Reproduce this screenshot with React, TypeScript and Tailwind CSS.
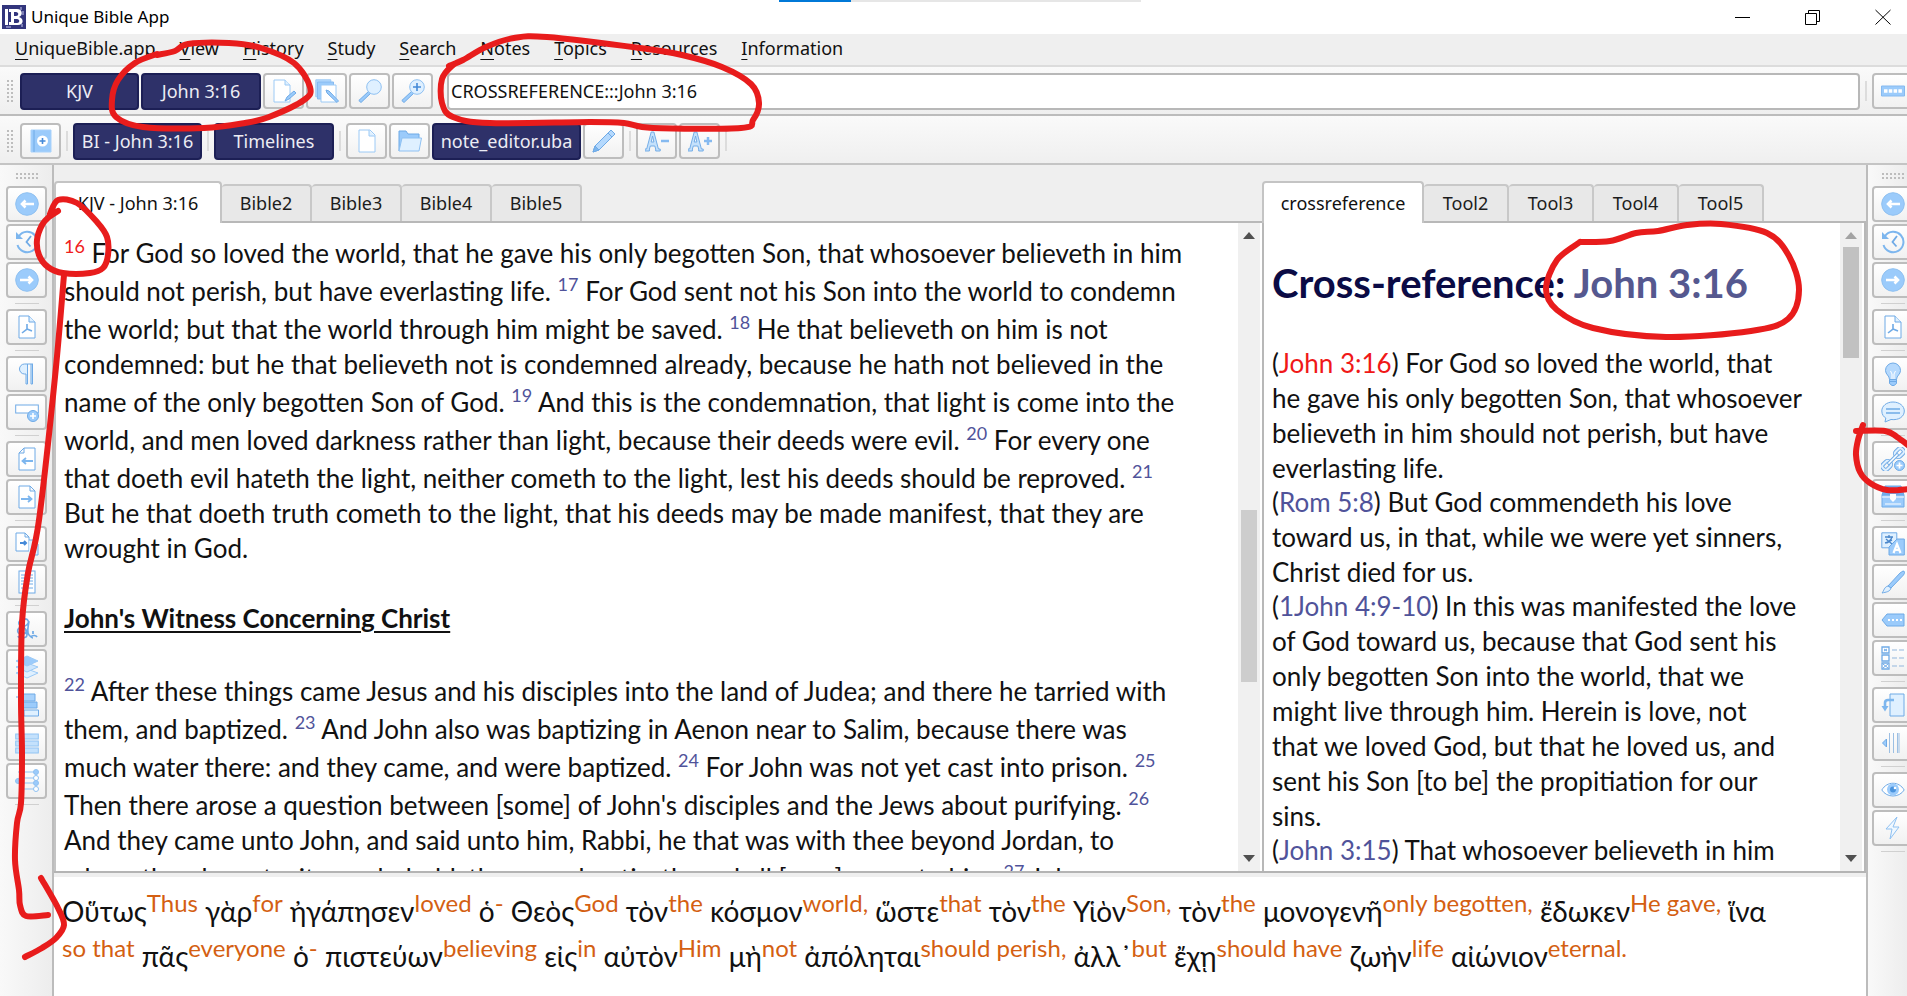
import type { ReactNode } from "react";

const MID = "#6faae6";
const SOFT = "#9bcbfb";
const PALE = "#dff0ff";

function Icon({ name }: { name: string }) {
  return (
    <svg viewBox="0 0 24 24" className="size-6 shrink-0" fill="none" stroke={MID} strokeWidth={1} aria-hidden="true">
      {ICONS[name]}
    </svg>
  );
}

const page = "M4 1h11l5 5v17H4z";

const ICONS: Record<string, ReactNode> = {
  prev: (
    <>
      <circle cx="12" cy="12" r="11.3" fill={SOFT} stroke="#8fc0f0" />
      <path d="M19 12H7M10.500 8.500 7 12l3.500 3.500" stroke="#fff" strokeWidth="2.600" />
    </>
  ),
  next: (
    <>
      <circle cx="12" cy="12" r="11.3" fill={SOFT} stroke="#8fc0f0" />
      <path d="M5 12h12M13.500 8.500 17 12l-3.500 3.500" stroke="#fff" strokeWidth="2.600" />
    </>
  ),
  history: (
    <>
      <path d="M4 6a10.200 10.200 0 1 1-1.500 9" stroke="#7db6ee" strokeWidth="2" />
      <path d="M1 2v7h7z" fill="#7db6ee" stroke="none" />
      <path d="M16 6l-4.500 6 4 4.500" strokeWidth="1.800" />
    </>
  ),
  pdf: (
    <>
      <path d="M4 1h10l6 6v16H4z" fill="#fff" />
      <path d="M14 1v6h6" fill={PALE} />
      <path d="M12 9v5l-5 4M12 14l5 2" strokeWidth="1.600" />
    </>
  ),
  pilcrow: <path d="M18 2H9.500a4.500 4.500 0 0 0 0 10H11V22h1.500V2M16 2v20h1.500V2" fill={PALE} />,
  addrow: (
    <>
      <rect x=".7" y="5" width="22.600" height="8" fill="#fff" />
      <circle cx="18" cy="16" r="5.500" fill={SOFT} />
      <path d="M18 13v6M15 16h6" stroke="#fff" strokeWidth="1.600" />
    </>
  ),
  pageprev: (
    <>
      <path d="M20 1H9L4 6v17h16zM9 1v5H4" fill="#fff" />
      <path d="M18 14H8m3-3-3.500 3 3.500 3" stroke="#7db6ee" strokeWidth="1.800" />
    </>
  ),
  pagenext: (
    <>
      <path d="M4 1h11l5 5v17H4zM15 1v5h5" fill="#fff" />
      <path d="M6 14h10m-3-3 3.500 3-3.500 3" stroke="#7db6ee" strokeWidth="1.800" />
    </>
  ),
  pages: (
    <>
      <path d="M1 1h9l4 4v14H1zM10 1v4h4" fill="#fff" />
      <path d="M14 8h5l4 4v11h-9" fill={PALE} />
      <path d="M5 11h6m-2-2 2 2-2 2" stroke="#4489d8" strokeWidth="2" />
    </>
  ),
  doc: (
    <>
      <rect x="4" y="1" width="16" height="22" fill="#fff" />
      <path d="M6 5h5m2 0h5M6 8h5m2 0h5M6 11h5m2 0h5M6 14h5m2 0h5M6 18h5m2 0h5" />
    </>
  ),
  alpha: (
    <path
      d="M13 3c-3-2-8-1-9 2s3 5 6 4 5-5 2-6M13 6c1 6-1 11-6 11s-6-5-1-7 7 9 5 10-7 2-8-1M14 4c-1 5-2 12 0 14s3 3 4 3M18 14v3M16 20c1-2 5-2 6 0"
      strokeWidth="1.700"
    />
  ),
  layers: (
    <g stroke="#9ccaf6">
      <path d="m1 18 11-4 11 4-11 5z" fill={PALE} />
      <path d="m1 12 11-4 11 4-11 5z" fill="#cde6fd" />
      <path d="m1 6 11-5 11 5-11 5z" fill={SOFT} />
    </g>
  ),
  bars: (
    <>
      <path d="M1 4h3M6 1v7h14V1z" fill="#a9d2fb" />
      <path d="M8 9h14v6H8z" fill={SOFT} />
      <path d="M9 17h14.500v6H9z" fill={PALE} />
    </>
  ),
  rows: (
    <g fill="#c4e1fc" stroke="#92c4f3">
      <rect x=".7" y="3" width="22.600" height="5" />
      <rect x=".7" y="10" width="22.600" height="5" />
      <rect x=".7" y="17" width="22.600" height="5" />
    </g>
  ),
  timeline: (
    <g stroke="#8fc1f2">
      <path d="M3 3h16M7 9h12M3 14h16M7 20h12" />
      <circle cx="21" cy="3" r="2.500" fill={SOFT} />
      <circle cx="21" cy="9" r="2.500" fill="#fff" />
      <circle cx="21" cy="14" r="2.500" fill={SOFT} />
      <circle cx="21" cy="20" r="2.500" fill="#fff" />
      <circle cx="3" cy="12" r="2.500" fill={SOFT} />
    </g>
  ),
  bulb: (
    <>
      <path d="M12 1a7.500 7.500 0 0 0-7.500 7.500c0 4 4 5 4 9h7c0-4 4-5 4-9A7.500 7.500 0 0 0 12 1z" fill="#b5d9fd" />
      <path d="M8.500 17.500h7v4L13 23.500h-2L8.500 21.500zM8.500 19.500h7" fill={SOFT} />
      <path d="M9.500 9l1.500 3v5M14.500 9 13 12v5" stroke="#fff" />
    </>
  ),
  comment: (
    <>
      <path d="M12 2C5.500 2 .8 6 .8 11c0 3.500 2 6 4 7L4 22l6-2.500c8 1 13.300-3 13.300-8.500C23.300 6 18.500 2 12 2z" fill={PALE} />
      <path d="M5 9h14M5 13h14" strokeWidth="1.500" />
    </>
  ),
  chain: (
    <>
      <g transform="rotate(-45 12 12)">
        <g strokeWidth="4">
          <rect x="-1.500" y="8.800" width="9" height="6.400" rx="2.500" />
          <rect x="16.500" y="8.800" width="9" height="6.400" rx="2.500" />
        </g>
        <g strokeWidth="2" stroke={PALE}>
          <rect x="-1.500" y="8.800" width="9" height="6.400" rx="2.500" />
          <rect x="16.500" y="8.800" width="9" height="6.400" rx="2.500" />
        </g>
        <rect x="5" y="10.700" width="14" height="2.600" rx="1" fill="#fff" />
      </g>
      <circle cx="18.500" cy="18.500" r="5" fill={SOFT} />
      <path d="M18.500 15.500v6M15.500 18.500h6" stroke="#fff" strokeWidth="1.700" />
    </>
  ),
  chest: (
    <>
      <path d="M4 1h16l3 9H1z" fill="#74aef0" />
      <path d="M5 4h14" stroke="#cfe6fd" />
      <path d="M1 10h22v12H1z" fill={SOFT} />
      <path d="M1 12h22M4 19h16" stroke="#fff" />
      <path d="M9 9h6v5l-3 3-3-3z" fill="#fff" stroke="none" />
    </>
  ),
  translate: (
    <>
      <path d="M.8.8h15v15H.8z" fill={PALE} />
      <path d="M4 5h8M8 3v3M4 11c4-1 6-3 7-6M5 7l6 5M6 11l5-3" stroke="#4a86ca" strokeWidth="1.300" />
      <path d="M8 15l8-8h7.300v16H8z" fill={SOFT} />
      <path d="m12.500 21 3.500-9 3.500 9M14 18h4" stroke="#fff" strokeWidth="2.200" />
    </>
  ),
  brush: (
    <>
      <path d="M22 1c2 0 2 2 .5 4L10 18l-3-2L19 3z" fill={SOFT} />
      <path d="m7 16 3 2c-1 4-5 4-9 5 2-2 2-6 6-7z" fill={PALE} />
    </>
  ),
  tag: (
    <>
      <path d="m1 12 5-6h17v12H6z" fill={SOFT} />
      <path d="M7 12h15" stroke="#fff" strokeWidth="2.200" strokeDasharray="2 2" />
    </>
  ),
  list: (
    <>
      <path d="M1 1h7v6H1zM1 9h7v6H1zM1 17h7v6H1z" fill="#fff" strokeWidth="1.300" />
      <path d="M3 3l3 2m0-2L3 5M2 18l5 4m0-4-5 4" fill={SOFT} />
      <path d="M11 4h12M11 12h12M11 20h12" strokeDasharray="5 2" stroke="#93b7dd" />
    </>
  ),
  replace: (
    <>
      <path d="M9 1h14v22H9z" fill={PALE} />
      <path d="M13 7H7c-2 0-3 1-3 3v5" stroke="#7db6ee" strokeWidth="2.600" />
      <path d="M.5 13h7L4 18.500z" fill="#7db6ee" stroke="none" />
    </>
  ),
  align: (
    <>
      <path d="M5.500 8 1.500 12l4 4z" fill={SOFT} />
      <path d="M8.500 2v20M12.500 2v20M16.500 2v20M18 2v20" stroke="#9cbfe3" />
    </>
  ),
  eye: (
    <>
      <path d="M.8 12C6 3 18 3 23.200 12 18 20 6 20 .8 12z" fill="#fff" />
      <circle cx="12" cy="11.500" r="6" fill={SOFT} stroke="none" />
      <circle cx="12" cy="11.500" r="3" fill="#4b94de" stroke="none" />
      <circle cx="14" cy="10" r="1.300" fill="#fff" stroke="none" />
    </>
  ),
  bolt: <path d="M16 1 5 13h6l-2 10 9-12h-6z" fill="#f0f8ff" stroke="#8fc1f2" />,
  edit: (
    <>
      <path d="M2 1h11l5 5v17H2z" fill="#fff" stroke="#9ccaf6" />
      <path d="M13 1v5h5" fill={PALE} stroke="#9ccaf6" />
      <path d="m13 22 2-4 7-6 2 2-7 6z" fill={SOFT} />
    </>
  ),
  copies: (
    <>
      <path d="M.8.8h15v17h-15z" fill="#b5d9fd" stroke="#9ccaf6" />
      <path d="M2.500 3h16v17h-16z" fill={SOFT} stroke="#86baf0" />
      <path d="M6 6h15v17H6z" fill="#fff" stroke="#9ccaf6" />
      <path d="m11 11 3 1 9.500 10-1.500 1.500L12 14z" fill={SOFT} />
    </>
  ),
  search: (
    <>
      <path d="m11 12 2 2-10 9.500L.8 21.500z" fill={SOFT} />
      <circle cx="16" cy="8" r="7.300" fill={PALE} stroke="#8fc1f2" />
    </>
  ),
  zoom: (
    <>
      <path d="m11 12 2 2-10 9.500L.8 21.500z" fill={SOFT} />
      <circle cx="16" cy="8" r="7.300" fill={PALE} stroke="#8fc1f2" />
      <path d="M16 4v8M12 8h8" stroke="#4489d8" strokeWidth="1.600" />
    </>
  ),
  bookadd: (
    <>
      <path d="M2 1h20v22H2z" fill={SOFT} stroke="#a9d2fb" />
      <path d="M5 1v22" stroke="#6faae6" />
      <circle cx="13.500" cy="12" r="5.500" fill="#fff" stroke="none" />
      <path d="M13.500 9v6M10.500 12h6" stroke="#4489d8" strokeWidth="1.600" />
    </>
  ),
  file: (
    <>
      <path d={page} fill="#fff" stroke="#9ccaf6" />
      <path d="M14 1v6h6" fill={PALE} stroke="#9ccaf6" />
    </>
  ),
  folder: (
    <>
      <path d="M1 22V2h7l2 3h11v4" fill={SOFT} />
      <path d="M1 22 4 9h19.500L21 22z" fill={PALE} stroke="#8fc1f2" />
    </>
  ),
  pencil: (
    <>
      <path d="m1 23 2-6L19 1l4 4L7 21z" fill="#b5d9fd" />
      <path d="m16 4 4 4M1 23l2-6 4 4z" fill="#7db6ee" />
    </>
  ),
  smaller: (
    <>
      <path d="M1 22h5v-2l1-3h5l1 3v2h5v-2h-2L11 3H8L3 20H1zM8 13l1.500-6 1.500 6z" transform="translate(-1 0) scale(.9 1)" fill="#c4e1fc" fillRule="evenodd" />
      <path d="M16 12h8" strokeWidth="2.500" stroke="#86baf0" />
    </>
  ),
  larger: (
    <>
      <path d="M1 22h5v-2l1-3h5l1 3v2h5v-2h-2L11 3H8L3 20H1zM8 13l1.500-6 1.500 6z" transform="translate(-1 0) scale(.9 1)" fill="#c4e1fc" fillRule="evenodd" />
      <path d="M16 12h8M20 8v8" strokeWidth="2.500" stroke="#86baf0" />
    </>
  ),
  keys: (
    <>
      <path d="M.5 7h23v10H.5z" fill={SOFT} stroke="#86baf0" />
      <path d="M3 12h18" stroke="#fff" strokeWidth="3.500" strokeDasharray="3.500 1.300" />
    </>
  ),
};

function Tool({ icon, label }: { icon: string; label: string }) {
  return (
    <button
      type="button"
      aria-label={label}
      className="flex h-9 w-[41px] shrink-0 items-center justify-center rounded-[4px] border-2 border-[#bdbdbd] bg-linear-to-b from-white to-[#f1f1f1]"
    >
      <Icon name={icon} />
    </button>
  );
}

function NavyButton({ children, className = "" }: { children: ReactNode; className?: string }) {
  return (
    <button
      type="button"
      className={`h-[37px] shrink-0 rounded-[4px] border-2 border-[#1c1f55] bg-[#2e3169] text-center text-[18px] text-[#ececf4] ${className}`}
    >
      {children}
    </button>
  );
}

function Divider() {
  return <span className="mx-[5px] h-5 w-[2px] shrink-0 bg-[#dcdcdc]" />;
}

function Grip({ className }: { className: string }) {
  return (
    <span
      className={`shrink-0 bg-[radial-gradient(circle,#bdbdbd_1px,transparent_1px)] bg-size-[4px_4px] ${className}`}
    />
  );
}

function SideBar({ groups, side }: { groups: string[][]; side: "left" | "right" }) {
  return (
    <nav
      aria-label={`${side} tools`}
      className={
        side === "left"
          ? "flex w-[54px] shrink-0 flex-col border-r-2 border-[#bcbcbc] bg-linear-to-r from-[#f9f9f9] to-[#ededed] pt-[7px] pl-[6px]"
          : "flex w-[41px] shrink-0 flex-col overflow-hidden border-l-2 border-[#bcbcbc] bg-linear-to-r from-[#f9f9f9] to-[#ededed] pt-[7px] pl-1"
      }
    >
      <Grip className="mb-[6px] ml-[9px] h-2 w-6" />
      {groups.map((group, i) => (
        <div key={i} className="flex flex-col">
          <div className="flex flex-col gap-[2px]">
            {group.map((icon) => (
              <Tool key={icon} icon={icon} label={icon} />
            ))}
          </div>
          <span className="my-[5px] ml-[9px] h-px w-6 bg-[#d0d0d0]" />
        </div>
      ))}
    </nav>
  );
}

function Tabs({ labels, className }: { labels: string[]; className: string }) {
  return (
    <div role="tablist" className={`flex h-[58px] shrink-0 items-end border-b-2 border-[#b8b8b8] bg-[#efefef] ${className}`}>
      {labels.map((label, i) => (
        <button
          key={label}
          type="button"
          role="tab"
          aria-selected={i === 0}
          className={
            i === 0
              ? "-mb-[2px] h-[42px] w-(--first) rounded-t-[4px] border-2 border-b-0 border-[#c4c4c4] bg-white text-[18px]"
              : "h-[37px] w-(--rest) rounded-t-[4px] border-t-2 border-r-2 border-[#c8c8c8] bg-[#e8e8e8] text-[18px] text-[#1c1c1c]"
          }
        >
          {label}
        </button>
      ))}
    </div>
  );
}

function ScrollBar({ thumb, active }: { thumb: string; active: boolean }) {
  return (
    <div className="mr-[2px] flex w-[22px] shrink-0 flex-col items-center bg-[#f0f0f0]">
      <svg viewBox="0 0 22 24" className="h-6 w-[22px] shrink-0" aria-hidden="true">
        <path d="M5 16 11 9l6 7z" fill={active ? "#505050" : "#a3a3a3"} />
      </svg>
      <div className="flex min-h-0 flex-1 flex-col">
        <div className={thumb} />
      </div>
      <svg viewBox="0 0 22 24" className="h-6 w-[22px] shrink-0" aria-hidden="true">
        <path d="M5 8l6 7 6-7z" fill="#505050" />
      </svg>
    </div>
  );
}

type Part = string | number;

/* Numbers in a line are verse numbers. */
const OPENING: Part[][] = [
  [16, " For God so loved the world, that he gave his only begotten Son, that whosoever believeth in him"],
  ["should not perish, but have everlasting life. ", 17, " For God sent not his Son into the world to condemn"],
  ["the world; but that the world through him might be saved. ", 18, " He that believeth on him is not"],
  ["condemned: but he that believeth not is condemned already, because he hath not believed in the"],
  ["name of the only begotten Son of God. ", 19, " And this is the condemnation, that light is come into the"],
  ["world, and men loved darkness rather than light, because their deeds were evil. ", 20, " For every one"],
  ["that doeth evil hateth the light, neither cometh to the light, lest his deeds should be reproved. ", 21],
  ["But he that doeth truth cometh to the light, that his deeds may be made manifest, that they are"],
  ["wrought in God."],
];

const WITNESS: Part[][] = [
  [22, " After these things came Jesus and his disciples into the land of Judea; and there he tarried with"],
  ["them, and baptized. ", 23, " And John also was baptizing in Aenon near to Salim, because there was"],
  ["much water there: and they came, and were baptized. ", 24, " For John was not yet cast into prison. ", 25],
  ["Then there arose a question between [some] of John's disciples and the Jews about purifying. ", 26],
  ["And they came unto John, and said unto him, Rabbi, he that was with thee beyond Jordan, to"],
  ["whom thou barest witness, behold, the same baptizeth, and all [men] come to him. ", 27, " John"],
];

function VerseLines({ lines }: { lines: Part[][] }) {
  return (
    <>
      {lines.map((line, i) => {
        const tall = line.some((p) => typeof p === "number");
        return (
          <div key={i} className={tall ? "h-[38px] pt-[3px]" : "h-[35px]"}>
            {line.map((p, j) =>
              typeof p === "number" ? (
                <a
                  key={j}
                  href={`#v${p}`}
                  className={p === 16 ? "align-[10px] text-[18px] leading-none text-[#f02020]" : "align-[10px] text-[18px] leading-none text-[#50539a]"}
                >
                  {p}
                </a>
              ) : (
                <span key={j}>{p}</span>
              ),
            )}
          </div>
        );
      })}
    </>
  );
}

const REFERENCES: { ref: string; lines: string[]; current?: boolean }[] = [
  {
    ref: "John 3:16",
    current: true,
    lines: [
      "For God so loved the world, that",
      "he gave his only begotten Son, that whosoever",
      "believeth in him should not perish, but have",
      "everlasting life.",
    ],
  },
  {
    ref: "Rom 5:8",
    lines: ["But God commendeth his love", "toward us, in that, while we were yet sinners,", "Christ died for us."],
  },
  {
    ref: "1John 4:9-10",
    lines: [
      "In this was manifested the love",
      "of God toward us, because that God sent his",
      "only begotten Son into the world, that we",
      "might live through him. Herein is love, not",
      "that we loved God, but that he loved us, and",
      "sent his Son [to be] the propitiation for our",
      "sins.",
    ],
  },
  { ref: "John 3:15", lines: ["That whosoever believeth in him"] },
];

const GREEK: [string, string][][] = [
  [
    ["Οὕτως", "Thus"],
    ["γὰρ", "for"],
    ["ἠγάπησεν", "loved"],
    ["ὁ", "-"],
    ["Θεὸς", "God"],
    ["τὸν", "the"],
    ["κόσμον", "world,"],
    ["ὥστε", "that"],
    ["τὸν", "the"],
    ["Υἱὸν", "Son,"],
    ["τὸν", "the"],
    ["μονογενῆ", "only begotten,"],
    ["ἔδωκεν", "He gave,"],
    ["ἵνα", ""],
  ],
  [
    ["", "so that"],
    ["πᾶς", "everyone"],
    ["ὁ", "-"],
    ["πιστεύων", "believing"],
    ["εἰς", "in"],
    ["αὐτὸν", "Him"],
    ["μὴ", "not"],
    ["ἀπόληται", "should perish,"],
    ["ἀλλ᾽", "but"],
    ["ἔχῃ", "should have"],
    ["ζωὴν", "life"],
    ["αἰώνιον", "eternal."],
  ],
];

const MENUS = ["UniqueBible.app", "View", "History", "Study", "Search", "Notes", "Topics", "Resources", "Information"];

const STROKES: [number, number][][] = [
  [[157, 55], [175, 51], [188, 44], [229, 43], [261, 48], [294, 63], [310, 87], [304, 100], [269, 117], [245, 123], [204, 128], [143, 127], [116, 117], [112, 100], [118, 80], [135, 63], [157, 54]],
  [[449, 66], [463, 60], [486, 47], [514, 38], [547, 37], [640, 48], [682, 55], [722, 67], [751, 84], [759, 103], [753, 120], [741, 128], [653, 128], [624, 123], [590, 122], [490, 123], [453, 117], [442, 103], [442, 79], [453, 65], [463, 60]],
  [[58, 211], [49, 217], [42, 225], [37, 240], [39, 255], [48, 267], [63, 273], [90, 273], [103, 268], [108, 255], [107, 237], [97, 222], [77, 203], [58, 200], [50, 214]],
  [[64, 275], [55, 377], [39, 520], [28, 573], [22, 623], [21, 700], [22, 753], [21, 803], [17, 823], [15, 860], [19, 890], [20, 905], [26, 916], [48, 915]],
  [[41, 878], [58, 908], [64, 925], [56, 938], [42, 948], [25, 957]],
  [[1580, 242], [1610, 241], [1636, 233], [1658, 231], [1687, 225], [1721, 224], [1767, 233], [1789, 256], [1799, 290], [1788, 319], [1751, 331], [1666, 337], [1593, 328], [1557, 310], [1546, 289], [1557, 260], [1580, 242]],
  [[1856, 431], [1885, 431], [1897, 437], [1909, 446]],
  [[1863, 425], [1858, 440], [1856, 455], [1860, 472], [1870, 483], [1887, 490], [1909, 489]],
];

/* Catmull-Rom spline through the points, written as cubic Béziers. */
function smooth(points: [number, number][]) {
  let d = `M${points[0][0]} ${points[0][1]}`;
  for (let i = 0; i < points.length - 1; i++) {
    const p0 = points[i - 1] ?? points[i];
    const p1 = points[i];
    const p2 = points[i + 1];
    const p3 = points[i + 2] ?? p2;
    d += `C${p1[0] + (p2[0] - p0[0]) / 6} ${p1[1] + (p2[1] - p0[1]) / 6} ${p2[0] - (p3[0] - p1[0]) / 6} ${p2[1] - (p3[1] - p1[1]) / 6} ${p2[0]} ${p2[1]}`;
  }
  return d;
}

export default function App() {
  return (
    <div className="relative flex h-screen flex-col overflow-hidden bg-[#efefef] font-['Noto_Sans',sans-serif] text-[#111]">
      <header className="relative flex h-[34px] shrink-0 items-center bg-white pl-[2px]">
        <svg viewBox="0 0 24 24" className="size-6" aria-hidden="true">
          <path d="M0 0h24v24H0z" fill="#32357c" />
          <path d="M3 4h3v16H3zM7 4h8c6 0 6 7 2 8 5 1 5 8-1 8H7v-3h2V7H7zM12 7v4h2c3 0 3-4 0-4zM12 14v4h3c3 0 3-4 0-4z" fill="#fff" fillRule="evenodd" />
          <path d="M19 2v3M21 6v4M20 19v3M4 22h5" stroke="#c9caf0" />
        </svg>
        <h1 className="pl-[5px] text-[17px] text-black">Unique Bible App</h1>
        <div className="absolute top-0 left-[779px] flex h-[2px] w-[362px] bg-[#e6e6e6]">
          <span className="w-[72px] bg-[#0078d7]" />
        </div>
        <div className="ml-auto flex items-center gap-[54px] pr-4">
          <button type="button" aria-label="Minimize">
            <svg viewBox="0 0 16 16" className="size-4" stroke="#000" fill="none"><path d="M0 8.500h15" /></svg>
          </button>
          <button type="button" aria-label="Restore">
            <svg viewBox="0 0 16 16" className="size-4" stroke="#000" fill="none"><path d="M.5 4.500h11v11H.5zM3.500 4.500v-3h11v11h-3" /></svg>
          </button>
          <button type="button" aria-label="Close">
            <svg viewBox="0 0 16 16" className="size-4" stroke="#000" fill="none"><path d="m.5 1 15 14.500M15.500 1 .5 15.500" /></svg>
          </button>
        </div>
      </header>

      <nav aria-label="Main menu" className="flex h-[33px] shrink-0 items-start border-b-2 border-[#dcdcdc] pl-[3px]">
        {MENUS.map((m) => (
          <button key={m} type="button" className="px-3 text-[18px] leading-7">
            <span className="underline decoration-1 underline-offset-4">{m[0]}</span>
            {m.slice(1)}
          </button>
        ))}
      </nav>

      <div className="flex h-[49px] shrink-0 items-center border-b-2 border-[#bcbcbc] bg-linear-to-b from-[#fafafa] to-[#efefef] pt-px pl-[6px]">
        <Grip className="mr-[6px] h-6 w-2" />
        <div className="flex min-w-0 flex-1 items-center gap-[2px]">
          <NavyButton className="w-[119px]">KJV</NavyButton>
          <NavyButton className="w-[120px]">John 3:16</NavyButton>
          <Tool icon="edit" label="Edit note" />
          <Tool icon="copies" label="Edit notes" />
          <Tool icon="search" label="Search" />
          <Tool icon="zoom" label="Search more" />
          <input
            aria-label="Command"
            defaultValue="CROSSREFERENCE:::John 3:16"
            className="ml-3 h-[37px] min-w-0 flex-1 rounded-[4px] border-2 border-[#b8b8b8] bg-white px-[2px] text-[18px] outline-none"
          />
        </div>
        <Divider />
        <div className="w-[35px] shrink-0 overflow-hidden">
          <Tool icon="keys" label="Toolbar options" />
        </div>
      </div>

      <div className="flex h-[49px] shrink-0 items-center border-b-2 border-[#c4c4c4] bg-linear-to-b from-[#fafafa] to-[#efefef] pt-[3px] pl-[6px]">
        <Grip className="mr-[6px] h-6 w-2" />
        <Tool icon="bookadd" label="Add book" />
        <Divider />
        <NavyButton className="w-[129px]">BI - John 3:16</NavyButton>
        <Divider />
        <NavyButton className="w-[120px]">Timelines</NavyButton>
        <Divider />
        <div className="flex items-center gap-[2px]">
          <Tool icon="file" label="New file" />
          <Tool icon="folder" label="Open file" />
          <NavyButton className="w-[149px]">note_editor.uba</NavyButton>
          <Tool icon="pencil" label="Write" />
        </div>
        <Divider />
        <div className="flex items-center gap-[2px]">
          <Tool icon="smaller" label="Smaller text" />
          <Tool icon="larger" label="Larger text" />
        </div>
        <Divider />
      </div>

      <div className="flex min-h-0 flex-1">
        <SideBar
          side="left"
          groups={[
            ["prev", "history", "next"],
            ["pdf"],
            ["pilcrow", "addrow"],
            ["pageprev", "pagenext"],
            ["pages", "doc"],
            ["alpha", "layers", "bars", "rows", "timeline"],
          ]}
        />

        <main className="flex min-w-0 flex-1 flex-col">
          <div className="flex min-h-0 flex-1 border-b-2 border-[#b4b4b4]">
            <section aria-label="Bible" className="flex min-w-0 flex-[2] flex-col">
              <Tabs className="[--first:168px] [--rest:90px]" labels={["KJV - John 3:16", "Bible2", "Bible3", "Bible4", "Bible5"]} />
              <div className="flex min-h-0 flex-1 border-l-2 border-[#c4c4c4] bg-white">
                <article className="min-w-0 flex-1 overflow-hidden pt-[10px] pl-2 font-['Lato','Noto_Sans',sans-serif] text-[26px] leading-[35px] whitespace-nowrap text-[#111]">
                  <VerseLines lines={OPENING} />
                  <h2 className="my-[35px] font-bold underline decoration-2 underline-offset-3">John's Witness Concerning Christ</h2>
                  <VerseLines lines={WITNESS} />
                </article>
                <ScrollBar active thumb="mt-[263px] h-[172px] w-4 bg-[#cdcdcd]" />
              </div>
            </section>
            <section aria-label="Cross-references" className="flex min-w-0 flex-1 flex-col">
              <Tabs className="[--first:162px] [--rest:85px]" labels={["crossreference", "Tool2", "Tool3", "Tool4", "Tool5"]} />
              <div className="flex min-h-0 flex-1 border-x-2 border-[#b8b8b8] bg-white">
                <article className="min-w-0 flex-1 overflow-hidden pt-9 pl-2 font-['Lato','Noto_Sans',sans-serif] text-[26px] whitespace-nowrap text-[#111]">
                  <h2 className="mb-[39px] text-[40px] leading-[48px] font-bold text-[#0b0b45]">
                    Cross-reference: <a href="#john-3-16" className="text-[#55588f]">John 3:16</a>
                  </h2>
                  {REFERENCES.map((r) => (
                    <p key={r.ref} className="-mb-px leading-[35px]">
                      (<a href={`#${r.ref}`} className={r.current ? "text-[#f01818]" : "text-[#50539a]"}>{r.ref}</a>){" "}
                      {r.lines.map((line, i) => (
                        <span key={i}>
                          {i > 0 && <br />}
                          {line}
                        </span>
                      ))}
                    </p>
                  ))}
                </article>
                <ScrollBar active={false} thumb="h-[111px] w-4 bg-[#c1c1c1]" />
              </div>
            </section>
          </div>

          <section
            aria-label="Interlinear"
            className="mt-1 h-[119px] shrink-0 overflow-hidden bg-white pt-3 pl-2 font-['Lato','Noto_Sans',sans-serif] text-[28px] leading-[45px] whitespace-nowrap text-[#111]"
          >
            {GREEK.map((line, i) => (
              <p key={i} lang="grc">
                {line.map(([word, gloss], j) => (
                  <span key={j}>
                    {word}
                    {gloss && <span lang="en" className="align-[10px] text-[24px] leading-none text-[#d45f12]">{gloss}</span>}{" "}
                  </span>
                ))}
              </p>
            ))}
          </section>
        </main>

        <SideBar
          side="right"
          groups={[
            ["prev", "history", "next"],
            ["pdf"],
            ["bulb", "comment"],
            ["chain", "chest"],
            ["translate", "brush", "tag", "list"],
            ["replace", "align"],
            ["eye", "bolt"],
          ]}
        />
      </div>

      <svg
        viewBox="0 0 1907 996"
        className="pointer-events-none absolute top-0 left-0 h-[996px] w-[1907px] max-w-none"
        fill="none"
        stroke="#e81c1c"
        strokeWidth="6"
        strokeLinecap="round"
        strokeLinejoin="round"
        aria-hidden="true"
      >
        {STROKES.map((s, i) => (
          <path key={i} d={smooth(s)} />
        ))}
      </svg>
    </div>
  );
}
